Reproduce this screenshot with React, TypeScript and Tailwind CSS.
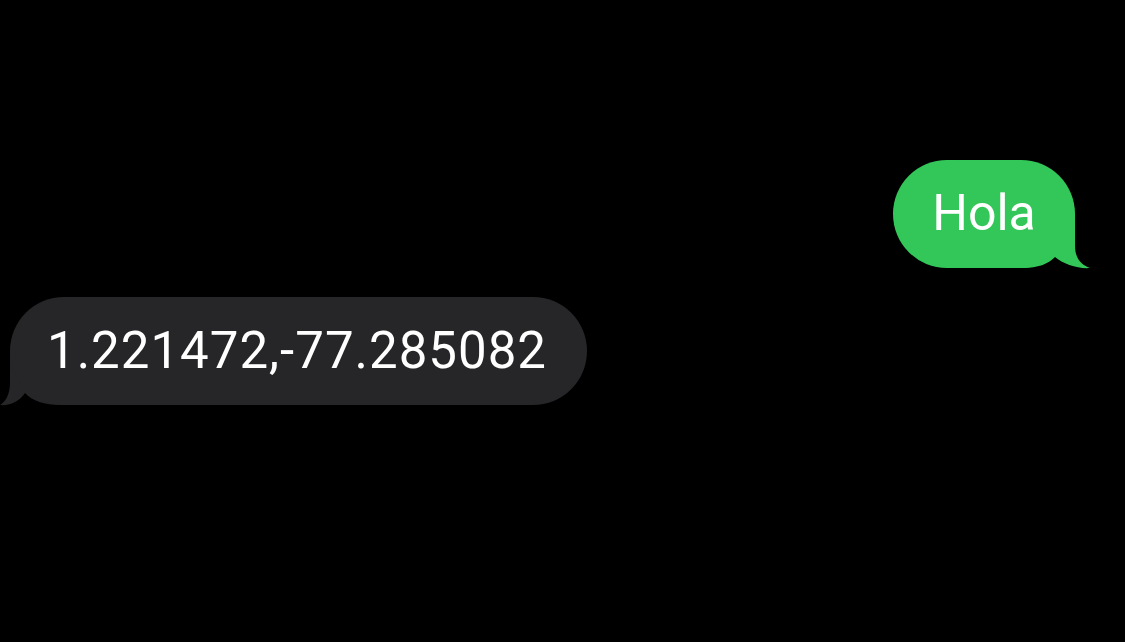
import React from "react";

export default function App() {
  return (
    <div
      className="w-full h-[642px] bg-black flex flex-col pt-[160px] overflow-hidden"
      style={{ fontFamily: "Roboto, 'Liberation Sans', sans-serif" }}
    >
      <div className="flex justify-end pr-[50px]">
        <div className="relative">
          <svg
            className="absolute left-0 top-0 overflow-visible"
            width={182}
            height={108}
            viewBox="0 0 182 108"
          >
            <path
              d="M120 54 L182 54 L182 86 C182 98 188 105 197 108 C185 109 170 104 162 97 C155 104 145 108 130 108 L120 108 Z"
              fill="#33c759"
            />
          </svg>
          <div className="relative w-[182px] h-[108px] rounded-[54px] bg-[#33c759] flex items-center justify-center text-white text-[50px] leading-none pb-[2px]">
            Hola
          </div>
        </div>
      </div>
      <div className="flex pl-[10px] mt-[29px]">
        <div className="relative">
          <svg
            className="absolute left-0 top-0 overflow-visible"
            width={577}
            height={108}
            viewBox="0 0 577 108"
          >
            <path
              d="M60 54 L0 54 L0 86 C0 98 -5 105 -10 108 C0 109 10 104 15 96 C22 104 35 108 50 108 L60 108 Z"
              fill="#262628"
            />
          </svg>
          <div className="relative w-[577px] h-[108px] rounded-[54px] bg-[#262628] flex items-center pl-[37px] text-white text-[51px] leading-none tracking-[1px] pb-[2px]">
            1.221472,-77.285082
          </div>
        </div>
      </div>
    </div>
  );
}
